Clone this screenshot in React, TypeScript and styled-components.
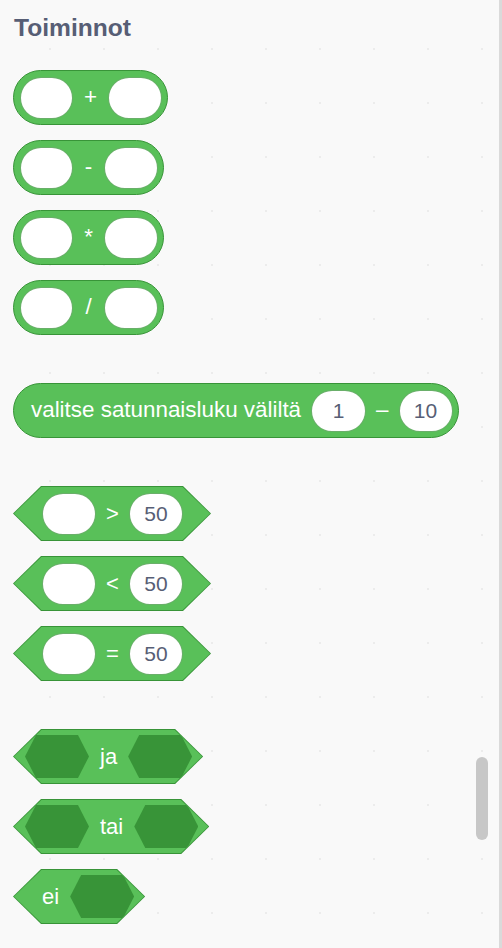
import React from "react";
import styled, { createGlobalStyle } from "styled-components";

const Global = createGlobalStyle`
  html, body { margin: 0; padding: 0; background: #f9f9f9; }
  body { font-family: "Liberation Sans", Arial, Helvetica, sans-serif; }
`;

const GREEN = "#59C059";
const DARK = "#389438";
const INK = "#575E75";

const Page = styled.div`
  position: relative;
  width: 502px;
  height: 948px;
  box-sizing: border-box;
  overflow: hidden;
  background-color: #f9f9f9;
  background-image: radial-gradient(circle, #ececec 0.9px, transparent 1.3px);
  background-size: 54px 54px;
  background-position: 23px 22px;
  border-right: 3px solid #dadada;
  padding: 14px 0 0 13px;
`;

const Heading = styled.div`
  font-size: 24.6px;
  line-height: 28px;
  font-weight: 700;
  color: ${INK};
  margin-left: 1px;
`;

const Group = styled.div<{ $top: number }>`
  display: flex;
  flex-direction: column;
  align-items: flex-start;
  gap: 15px;
  margin-top: ${(p) => p.$top}px;
`;

const Reporter = styled.div<{ $padLeft?: number; $gap?: number }>`
  display: inline-flex;
  align-items: center;
  box-sizing: border-box;
  height: 55px;
  padding: 0 5px 0 ${(p) => p.$padLeft ?? 6}px;
  gap: ${(p) => p.$gap ?? 11}px;
  background: ${GREEN};
  border: 1px solid ${DARK};
  border-radius: 28px;
  color: #fff;
  font-size: 22.4px;
  white-space: nowrap;
`;

const Label = styled.span<{ $w?: number }>`
  display: inline-block;
  min-width: ${(p) => p.$w ?? 0}px;
  text-align: center;
  line-height: 1;
`;

const Input = styled.div<{ $w?: number }>`
  display: flex;
  align-items: center;
  justify-content: center;
  box-sizing: border-box;
  min-width: ${(p) => p.$w ?? 54}px;
  height: 42px;
  padding: 0 12px;
  background: #fff;
  border: 1px solid rgba(56, 148, 56, 0.75);
  border-radius: 21px;
  color: ${INK};
  font-size: 21px;
`;

const hex = (d: number) =>
  `polygon(${d}px 0, calc(100% - ${d}px) 0, 100% 50%, calc(100% - ${d}px) 100%, ${d}px 100%, 0 50%)`;

const HexOutline = styled.div`
  display: inline-flex;
  box-sizing: border-box;
  height: 55px;
  padding: 1px;
  background: ${DARK};
  clip-path: ${hex(28)};
`;

const HexBody = styled.div<{ $padLeft: number; $padRight: number; $gap?: number }>`
  display: flex;
  align-items: center;
  box-sizing: border-box;
  height: 53px;
  padding: 0 ${(p) => p.$padRight - 1}px 0 ${(p) => p.$padLeft - 1}px;
  gap: ${(p) => p.$gap ?? 11}px;
  background: ${GREEN};
  clip-path: ${hex(27.4)};
  color: #fff;
  font-size: 22px;
  white-space: nowrap;
`;

const BoolSlot = styled.div`
  width: 64px;
  height: 43px;
  background: ${DARK};
  clip-path: ${hex(11)};
`;

const Scrollbar = styled.div`
  position: absolute;
  left: 476px;
  top: 757px;
  width: 12px;
  height: 83px;
  border-radius: 6px;
  background: #c7c7c7;
`;

const Arith = ({ op, w }: { op: string; w: number }) => (
  <Reporter>
    <Input $w={53} />
    <Label $w={w}>{op}</Label>
    <Input $w={54} />
  </Reporter>
);

const Compare = ({ op }: { op: string }) => (
  <HexOutline>
    <HexBody $padLeft={29} $padRight={28} $gap={10}>
      <Input $w={54} />
      <Label $w={13}>{op}</Label>
      <Input $w={54}>50</Input>
    </HexBody>
  </HexOutline>
);

const Logic = ({ word }: { word: string }) => (
  <HexOutline>
    <HexBody $padLeft={12} $padRight={11} $gap={11}>
      <BoolSlot />
      <Label>{word}</Label>
      <BoolSlot />
    </HexBody>
  </HexOutline>
);

export default function App() {
  return (
    <>
      <Global />
      <Page>
        <Heading>Toiminnot</Heading>
        <Group $top={28}>
          <Arith op="+" w={13} />
          <Arith op="-" w={9} />
          <Arith op="*" w={9} />
          <Arith op="/" w={9} />
        </Group>
        <Group $top={48}>
          <Reporter $padLeft={17} $gap={10}>
            <Label>valitse satunnaisluku väliltä</Label>
            <Input $w={55}>1</Input>
            <Label>–</Label>
            <Input $w={54}>10</Input>
          </Reporter>
        </Group>
        <Group $top={48}>
          <Compare op=">" />
          <Compare op="<" />
          <Compare op="=" />
        </Group>
        <Group $top={48}>
          <Logic word="ja" />
          <Logic word="tai" />
          <HexOutline>
            <HexBody $padLeft={29} $padRight={11} $gap={11}>
              <Label>ei</Label>
              <BoolSlot />
            </HexBody>
          </HexOutline>
        </Group>
        <Scrollbar />
      </Page>
    </>
  );
}
